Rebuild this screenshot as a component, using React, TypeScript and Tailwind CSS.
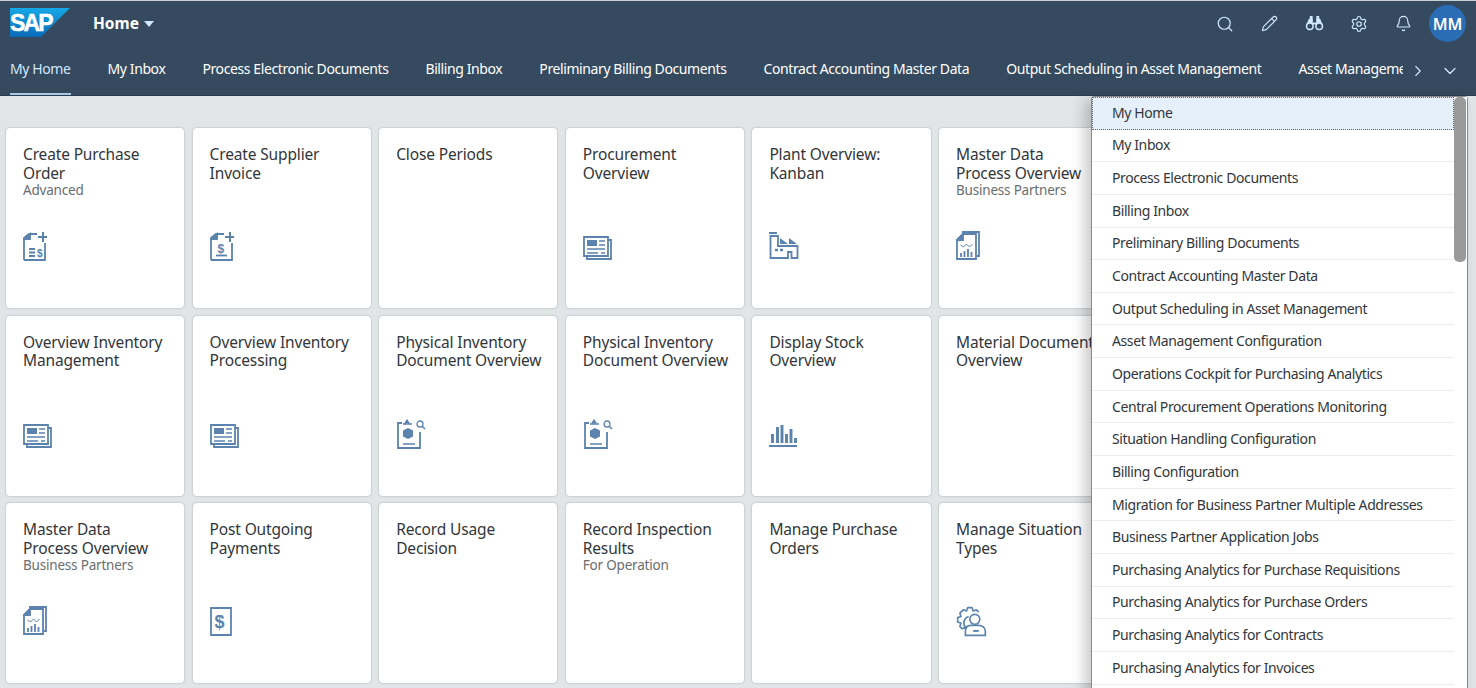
import React from "react";
import { Search, Pencil, Settings, Bell, ChevronRight, ChevronDown } from "lucide-react";

const C = "#5b83ad";

function Svg({ children, w = 32, h = 32 }: { children: React.ReactNode; w?: number; h?: number }) {
  return (
    <svg width={w} height={h} viewBox={`0 0 ${w} ${h}`} fill="none" stroke={C} strokeWidth="1.8">
      {children}
    </svg>
  );
}

const DocPlusList = () => (
  <Svg>
    <path d="M1 29V7l5-4h8M22 12v17H1" />
    <path d="M1 8l6-5v5z" fill={C} />
    <path d="M20 1v10M15 6h9" strokeWidth="2" />
    <path d="M6 18h6M6 21.500h6M6 25h6" strokeWidth="1.8" />
    <text x="14" y="25.5" fontSize="10" fontWeight="700" fill={C} stroke="none" fontFamily="Liberation Sans, sans-serif">$</text>
  </Svg>
);

const DocPlusDollar = () => (
  <Svg>
    <path d="M1 29V7l5-4h8M22 12v17H1" />
    <path d="M1 8l6-5v5z" fill={C} />
    <path d="M20 1v10M15 6h9" strokeWidth="2" />
    <path d="M6 24.500h11" strokeWidth="1.800" />
    <text x="7.5" y="21.5" fontSize="12" fontWeight="700" fill={C} stroke="none" fontFamily="Liberation Sans, sans-serif">$</text>
  </Svg>
);

const News = () => (
  <Svg>
    <path d="M1 6h24v19H1z" />
    <path d="M25 9h3v19H4v-3" />
    <path d="M4 9h10v6H4z" fill={C} stroke="none" />
    <path d="M16 10h6M16 14h6M4 18h18M4 22h11M18 22h4" strokeWidth="1.4" />
  </Svg>
);

const Factory = () => (
  <Svg>
    <path d="M0 2h8" strokeWidth="2" />
    <path d="M1.500 5v22h17.500v-6h3.500v6h6V15H9V5z" />
    <path d="M11 13V7l8 6zM20 13V7l8 6z" fill={C} stroke="none" />
    <path d="M6 19h3M11 19h3" strokeWidth="2.400" />
  </Svg>
);

const Report = () => (
  <Svg>
    <path d="M6 1h17v24h-2" />
    <path d="M1 28V9l6-6h13v25z" />
    <path d="M1 9l6-6v6z" fill={C} />
    <path d="M4.500 14l3 2 3-3 3 3 3-3" strokeWidth="1" />
    <path d="M5 26v-4M8.500 26v-6M12 26v-8M15.500 26v-5" strokeWidth="1.800" />
  </Svg>
);

const Clipboard = () => (
  <Svg>
    <path d="M6 4H2v25h22V13" />
    <path d="M7 5h9M9 4.500l2-3 2 3" strokeWidth="1.7" />
    <path d="M12 9l5 2.500v6L12 20l-5-2.500v-6z" fill={C} stroke="none" />
    <path d="M7 25h12" strokeWidth="1.5" />
    <circle cx="24" cy="5" r="3" strokeWidth="1.3" />
    <path d="M26 7l3 3" strokeWidth="1.5" />
  </Svg>
);

const Bars = () => (
  <Svg>
    <path d="M3.500 24v-9M8.500 24V8M13 24V6M17.500 24v-9M22 24V10M26.500 24v-5" strokeWidth="2.900" />
    <path d="M0 27h28" strokeWidth="2" />
  </Svg>
);

const Dollar = () => (
  <Svg>
    <path d="M1 2h20v27H1z" />
    <text x="4.500" y="22" fontSize="18" fontWeight="700" fill={C} stroke="none" fontFamily="Liberation Sans, sans-serif">$</text>
  </Svg>
);

const GearUser = () => (
  <svg width="31" height="31" viewBox="1.500 1.500 28 28" fill="none" stroke={C} strokeWidth="1.500">
    <path d="M22 7l-2-2-3 1-1-3h-4l-1 3-3-1-3 3 1 3-3 1v4l3 1-1 3 2 2 3-1 1 1" strokeLinejoin="round" />
    <path d="M10 21c-3-4-1-9 3-10" />
    <circle cx="18.500" cy="13.500" r="4.500" />
    <path d="M10 28v-4c0-3 2-5 5-5h7c3 0 6 2 6 5v4z" />
    <path d="M17 24h5" strokeWidth="1.800" />
  </svg>
);

type T = { t: string[]; s?: string; i?: React.ReactNode };

const tiles: T[] = [
  { t: ["Create Purchase", "Order"], s: "Advanced", i: <DocPlusList /> },
  { t: ["Create Supplier", "Invoice"], i: <DocPlusDollar /> },
  { t: ["Close Periods"] },
  { t: ["Procurement", "Overview"], i: <News /> },
  { t: ["Plant Overview:", "Kanban"], i: <Factory /> },
  { t: ["Master Data", "Process Overview"], s: "Business Partners", i: <Report /> },
  { t: [] },
  { t: ["Overview Inventory", "Management"], i: <News /> },
  { t: ["Overview Inventory", "Processing"], i: <News /> },
  { t: ["Physical Inventory", "Document Overview"], i: <Clipboard /> },
  { t: ["Physical Inventory", "Document Overview"], i: <Clipboard /> },
  { t: ["Display Stock", "Overview"], i: <Bars /> },
  { t: ["Material Documents", "Overview"] },
  { t: [] },
  { t: ["Master Data", "Process Overview"], s: "Business Partners", i: <Report /> },
  { t: ["Post Outgoing", "Payments"], i: <Dollar /> },
  { t: ["Record Usage", "Decision"] },
  { t: ["Record Inspection", "Results"], s: "For Operation" },
  { t: ["Manage Purchase", "Orders"] },
  { t: ["Manage Situation", "Types"], i: <GearUser /> },
  { t: [] },
];

const nav = [
  "My Home",
  "My Inbox",
  "Process Electronic Documents",
  "Billing Inbox",
  "Preliminary Billing Documents",
  "Contract Accounting Master Data",
  "Output Scheduling in Asset Management",
  "Asset Management Configuration",
];

const menu = [
  ...nav,
  "Operations Cockpit for Purchasing Analytics",
  "Central Procurement Operations Monitoring",
  "Situation Handling Configuration",
  "Billing Configuration",
  "Migration for Business Partner Multiple Addresses",
  "Business Partner Application Jobs",
  "Purchasing Analytics for Purchase Requisitions",
  "Purchasing Analytics for Purchase Orders",
  "Purchasing Analytics for Contracts",
  "Purchasing Analytics for Invoices",
  "Purchasing Analytics for Suppliers",
];

const Binoculars = () => (
  <svg width="19" height="15" viewBox="0 0 20 16" fill="#d1e8ff">
    <path d="M5 0h3v6H5zM12 0h3v6h-3z" />
    <path d="M4 3h4v4h4V3h4l3 7h-6l-1-1H8l-1 1H1z" />
    <circle cx="5" cy="11" r="3.500" fill="#354a5f" stroke="#d1e8ff" strokeWidth="1.600" />
    <circle cx="15" cy="11" r="3.500" fill="#354a5f" stroke="#d1e8ff" strokeWidth="1.600" />
  </svg>
);

const Logo = () => (
  <svg width="60" height="29" viewBox="0 0 60 29" className="shrink-0">
    <defs>
      <linearGradient id="sapg" x1="0" y1="0" x2="0" y2="1">
        <stop offset="0" stopColor="#16a8e6" />
        <stop offset="1" stopColor="#0a6ab8" />
      </linearGradient>
    </defs>
    <path d="M0 0h60L31 29H0z" fill="url(#sapg)" />
    <text x="0" y="23" fontSize="23" fontWeight="700" fill="#fff" stroke="#fff" strokeWidth="0.500" letterSpacing="-1.800" fontFamily="Liberation Sans, sans-serif">SAP</text>
  </svg>
);

export default function App() {
  return (
    <div className="relative h-[688px] w-[1476px] overflow-hidden bg-[#e2e5e7] font-['Noto_Sans',sans-serif]">
      <header className="h-[96px] border-t border-t-[#c9ced3] border-b border-b-[#2b3d4f] bg-[#354a5f]">
        <div className="flex h-[45px] items-center pl-[10px] pr-[10px]">
          <div className="mt-[-2px]">
            <Logo />
          </div>
          <div className="ml-[23px] flex items-center gap-[5px] text-[15.500px] font-bold text-white">
            Home
            <span className="h-0 w-0 border-x-[5.500px] border-t-[6px] border-x-transparent border-t-[#d1e8ff]" />
          </div>
          <div className="ml-auto flex items-center text-[#d1e8ff]">
            <Search size={18} strokeWidth={1.600} />
            <Pencil size={17} strokeWidth={1.600} className="ml-[27px]" />
            <div className="ml-[27px]">
              <Binoculars />
            </div>
            <Settings size={18} strokeWidth={1.600} className="ml-[26px]" />
            <Bell size={17} strokeWidth={1.600} className="ml-[27px]" />
            <div className="ml-[17px] flex h-[37px] w-[37px] items-center justify-center rounded-full bg-[#2a6db5] text-[16px] font-semibold text-white">
              MM
            </div>
          </div>
        </div>
        <div className="flex h-[49px] items-stretch pl-[10px]">
          <div className="flex w-[1393px] items-stretch gap-[37px] overflow-hidden">
            {nav.map((n, i) => (
              <div
                key={i}
                className={
                  i === 0
                    ? "flex shrink-0 items-center border-b-2 border-b-[#a9c8e6] pb-[2px] text-[14px] tracking-[-0.4px] text-[#d1e8ff]"
                    : "flex shrink-0 items-center border-b-2 border-b-transparent pb-[2px] text-[14px] tracking-[-0.4px] text-white"
                }
              >
                {n}
              </div>
            ))}
          </div>
          <div className="ml-[6px] flex items-center text-[#d1e8ff]">
            <ChevronRight size={18} strokeWidth={1.500} />
            <ChevronDown size={20} strokeWidth={1.500} className="ml-[13px]" />
          </div>
        </div>
      </header>

      <main className="grid w-[1600px] grid-cols-[repeat(7,178.300px)] gap-x-[8.300px] gap-y-[7.500px] pl-[6px] pt-[32px]">
        {tiles.map((t, i) => (
          <div
            key={i}
            className="flex h-[180px] flex-col rounded-[4px] bg-white pl-[17px] pt-[17px] pb-[45px] shadow-[0_0_2px_rgba(0,0,0,0.3)]"
          >
            <div className="text-[15.500px] leading-[18.500px] tracking-[-0.15px] text-[#32363a]">
              {t.t.map((l, j) => (
                <div key={j} className="whitespace-nowrap">
                  {l}
                </div>
              ))}
            </div>
            {t.s && <div className="text-[13.500px] leading-[17px] tracking-[-0.2px] text-[#6a6d70]">{t.s}</div>}
            <div className="mt-auto h-[32px]">{t.i}</div>
          </div>
        ))}
      </main>

      <div className="absolute left-[1091px] top-[96px] flex h-[600px] w-[377px] rounded-t-[3px] border border-[#8a8a8a] bg-white shadow-[-6px_4px_14px_rgba(0,0,0,0.22)]">
        <div className="w-[362px]">
          {menu.map((m, i) => (
            <div
              key={i}
              className={
                i === 0
                  ? "flex h-[32.650px] items-center border border-dotted border-[#5a6570] bg-[#e5f0fa] pb-[2px] pl-[19px] text-[14px] tracking-[-0.4px] text-[#32363a]"
                  : "flex h-[32.650px] items-center border-b border-b-[#ededed] pb-[1px] pl-[20px] text-[14px] tracking-[-0.4px] text-[#32363a]"
              }
            >
              {m}
            </div>
          ))}
        </div>
        <div className="w-[13px] flex-1 bg-white">
          <div className="h-[165px] w-[12px] rounded-[5px] bg-[#9a9a9a]" />
        </div>
      </div>
    </div>
  );
}
